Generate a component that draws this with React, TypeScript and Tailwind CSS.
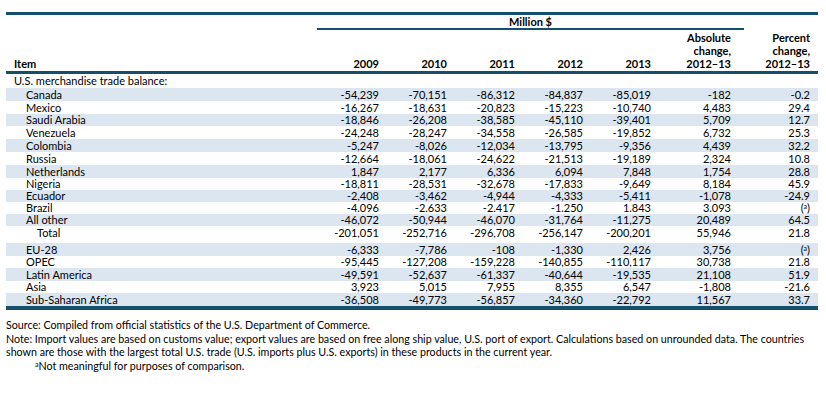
import React from "react";

type Row = { label: string; indent: number; h: number; band: boolean; v: (string | null)[] };

const NM = null;

const rows: Row[] = [
  { label: "Canada", indent: 20, h: 13, band: true, v: ["-54,239", "-70,151", "-86,312", "-84,837", "-85,019", "-182", "-0.2"] },
  { label: "Mexico", indent: 20, h: 13, band: false, v: ["-16,267", "-18,631", "-20,823", "-15,223", "-10,740", "4,483", "29.4"] },
  { label: "Saudi Arabia", indent: 20, h: 12, band: true, v: ["-18,846", "-26,208", "-38,585", "-45,110", "-39,401", "5,709", "12.7"] },
  { label: "Venezuela", indent: 20, h: 13, band: false, v: ["-24,248", "-28,247", "-34,558", "-26,585", "-19,852", "6,732", "25.3"] },
  { label: "Colombia", indent: 20, h: 13, band: true, v: ["-5,247", "-8,026", "-12,034", "-13,795", "-9,356", "4,439", "32.2"] },
  { label: "Russia", indent: 20, h: 13, band: false, v: ["-12,664", "-18,061", "-24,622", "-21,513", "-19,189", "2,324", "10.8"] },
  { label: "Netherlands", indent: 20, h: 13, band: true, v: ["1,847", "2,177", "6,336", "6,094", "7,848", "1,754", "28.8"] },
  { label: "Nigeria", indent: 20, h: 12, band: false, v: ["-18,811", "-28,531", "-32,678", "-17,833", "-9,649", "8,184", "45.9"] },
  { label: "Ecuador", indent: 20, h: 12, band: true, v: ["-2,408", "-3,462", "-4,944", "-4,333", "-5,411", "-1,078", "-24.9"] },
  { label: "Brazil", indent: 20, h: 12, band: false, v: ["-4.096", "-2.633", "-2.417", "-1.250", "1.843", "3.093", NM] },
  { label: "All other", indent: 20, h: 12, band: true, v: ["-46,072", "-50,944", "-46,070", "-31,764", "-11,275", "20,489", "64.5"] },
  { label: "Total", indent: 31, h: 17, band: false, v: ["-201,051", "-252,716", "-296,708", "-256,147", "-200,201", "55,946", "21.8"] },
  { label: "EU-28", indent: 20, h: 13, band: true, v: ["-6,333", "-7,786", "-108", "-1,330", "2,426", "3,756", NM] },
  { label: "OPEC", indent: 20, h: 12, band: false, v: ["-95,445", "-127,208", "-159,228", "-140,855", "-110,117", "30,738", "21.8"] },
  { label: "Latin America", indent: 20, h: 13, band: true, v: ["-49,591", "-52,637", "-61,337", "-40,644", "-19,535", "21,108", "51.9"] },
  { label: "Asia", indent: 20, h: 12, band: false, v: ["3,923", "5,015", "7,955", "8,355", "6,547", "-1,808", "-21.6"] },
  { label: "Sub-Saharan Africa", indent: 20, h: 13, band: true, v: ["-36,508", "-49,773", "-56,857", "-34,360", "-22,792", "11,567", "33.7"] },
];

const grid = "grid grid-cols-[305px_68px_68px_68px_68px_68px_80px_79px]";

function NotMeaningful() {
  return (
    <span>
      (<span className="relative -top-[3px] text-[7px]">a</span>)
    </span>
  );
}

export default function App() {
  return (
    <div
      className="w-[826px] h-[402px] bg-white text-black text-[11px] leading-[13px]"
      style={{ fontFamily: "Lato, 'Open Sans', sans-serif" }}
    >
      <div className="pt-[12px] pl-[6px]">
        <div className="w-[812px]">
          <div className="h-[3px] bg-[#14506e]" />
          {/* Million $ */}
          <div className="ml-[311px] w-[427px] text-center font-bold leading-[13px]">Million $</div>
          <div className="ml-[311px] w-[427px] h-[2px] bg-[#14506e]" />
          {/* header labels */}
          <div className={`${grid} font-bold pt-[1px] pb-[1px]`}>
            <div className="self-end pl-[8px]">Item</div>
            <div className="self-end text-right">2009</div>
            <div className="self-end text-right">2010</div>
            <div className="self-end text-right">2011</div>
            <div className="self-end text-right">2012</div>
            <div className="self-end text-right">2013</div>
            <div className="self-end text-right">
              Absolute
              <br />
              change,
              <br />
              2012–13
            </div>
            <div className="self-end text-right">
              Percent
              <br />
              change,
              <br />
              2012–13
            </div>
          </div>
          <div className="h-[3px] bg-[#14506e]" />
          {/* body */}
          <div className="h-[14px] pl-[8px] leading-[14px]">U.S. merchandise trade balance:</div>
          {rows.map((r) => (
            <div
              key={r.label}
              className={`${grid} ${r.band ? "bg-[#dce6f1]" : "bg-white"}`}
              style={{ height: r.h, lineHeight: r.h <= 12 ? `${r.h}px` : "13px" }}
            >
              <div style={{ paddingLeft: r.indent }}>{r.label}</div>
              {r.v.map((x, i) => (
                <div key={i} className="text-right">
                  {x === null ? <NotMeaningful /> : x}
                </div>
              ))}
            </div>
          ))}
          <div className="h-[4px] bg-[#14506e]" />
        </div>
        {/* notes */}
        <div className="pt-[8px] text-[10.7px] leading-[13.7px]">
          <div>Source: Compiled from official statistics of the U.S. Department of Commerce.</div>
          <div>
            Note: Import values are based on customs value; export values are based on free along ship value, U.S. port of
            export. Calculations based on unrounded data. The countries
            <br />
            shown are those with the largest total U.S. trade (U.S. imports plus U.S. exports) in these products in the
            current year.
          </div>
          <div className="pl-[29px]">
            <span className="relative -top-[3px] text-[7px]">a</span>Not meaningful for purposes of comparison.
          </div>
        </div>
      </div>
    </div>
  );
}
